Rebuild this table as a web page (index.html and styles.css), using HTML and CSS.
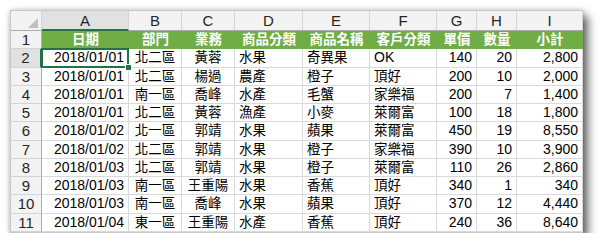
FILE: index.html
```html
<!DOCTYPE html>
<html lang="zh-Hant">
<head>
<meta charset="utf-8">
<title>Sheet</title>
<link rel="stylesheet" href="styles.css">
</head>
<body>
<div class="frame">
<div class="sheet">
  <div class="corner"><span class="tri"></span></div>
  <div class="ch selc">A</div><div class="ch">B</div><div class="ch">C</div><div class="ch">D</div><div class="ch">E</div><div class="ch">F</div><div class="ch">G</div><div class="ch">H</div><div class="ch">I</div>

  <div class="rh">1</div>
  <div class="hd">日期</div><div class="hd">部門</div><div class="hd">業務</div><div class="hd">商品分類</div><div class="hd">商品名稱</div><div class="hd">客戶分類</div><div class="hd">單價</div><div class="hd">數量</div><div class="hd">小計</div>

  <div class="rh selr">2</div>
  <div class="c r sel">2018/01/01</div><div class="c t m">北二區</div><div class="c t m">黃蓉</div><div class="c t">水果</div><div class="c t">奇異果</div><div class="c">OK</div><div class="c r">140</div><div class="c r">20</div><div class="c r">2,800</div>

  <div class="rh">3</div>
  <div class="c r">2018/01/01</div><div class="c t m">北二區</div><div class="c t m">楊過</div><div class="c t">農產</div><div class="c t">橙子</div><div class="c t">頂好</div><div class="c r">200</div><div class="c r">10</div><div class="c r">2,000</div>

  <div class="rh">4</div>
  <div class="c r">2018/01/01</div><div class="c t m">南一區</div><div class="c t m">喬峰</div><div class="c t">水產</div><div class="c t">毛蟹</div><div class="c t">家樂福</div><div class="c r">200</div><div class="c r">7</div><div class="c r">1,400</div>

  <div class="rh">5</div>
  <div class="c r">2018/01/01</div><div class="c t m">北二區</div><div class="c t m">黃蓉</div><div class="c t">漁產</div><div class="c t">小麥</div><div class="c t">萊爾富</div><div class="c r">100</div><div class="c r">18</div><div class="c r">1,800</div>

  <div class="rh">6</div>
  <div class="c r">2018/01/02</div><div class="c t m">北一區</div><div class="c t m">郭靖</div><div class="c t">水果</div><div class="c t">蘋果</div><div class="c t">萊爾富</div><div class="c r">450</div><div class="c r">19</div><div class="c r">8,550</div>

  <div class="rh">7</div>
  <div class="c r">2018/01/02</div><div class="c t m">北二區</div><div class="c t m">郭靖</div><div class="c t">水果</div><div class="c t">橙子</div><div class="c t">家樂福</div><div class="c r">390</div><div class="c r">10</div><div class="c r">3,900</div>

  <div class="rh">8</div>
  <div class="c r">2018/01/03</div><div class="c t m">北二區</div><div class="c t m">郭靖</div><div class="c t">水果</div><div class="c t">橙子</div><div class="c t">萊爾富</div><div class="c r">110</div><div class="c r">26</div><div class="c r">2,860</div>

  <div class="rh">9</div>
  <div class="c r">2018/01/03</div><div class="c t m">南一區</div><div class="c t m">王重陽</div><div class="c t">水果</div><div class="c t">香蕉</div><div class="c t">頂好</div><div class="c r">340</div><div class="c r">1</div><div class="c r">340</div>

  <div class="rh">10</div>
  <div class="c r">2018/01/03</div><div class="c t m">南一區</div><div class="c t m">喬峰</div><div class="c t">水果</div><div class="c t">蘋果</div><div class="c t">頂好</div><div class="c r">370</div><div class="c r">12</div><div class="c r">4,440</div>

  <div class="rh">11</div>
  <div class="c r">2018/01/04</div><div class="c t m">東一區</div><div class="c t m">王重陽</div><div class="c t">水產</div><div class="c t">香蕉</div><div class="c t">頂好</div><div class="c r">240</div><div class="c r">36</div><div class="c r">8,640</div>
</div>
</div>
</body>
</html>
```

FILE: styles.css
```css
html, body {
  margin: 0;
  padding: 0;
  background: #ffffff;
}

body {
  padding: 10px 0 0 10px;
  font-family: "Liberation Sans", "Noto Sans CJK TC", sans-serif;
  font-size: 14px;
  color: #000;
}

.frame {
  width: 573px;
  height: 223px;
  background: #ffffff;
  border: 1px solid #c8c8c8;
  box-sizing: border-box;
  box-shadow: 0 0 5px rgba(0, 0, 0, 0.22), 5px 6px 9px rgba(0, 0, 0, 0.6);
}

.sheet {
  display: grid;
  grid-template-columns: 31px 87px 53px 53px 68px 67px 67px 40px 40px 66px;
  grid-template-rows: 20px repeat(11, 18.25px);
}

.sheet > div {
  box-sizing: border-box;
  overflow: visible;
  white-space: nowrap;
}

.corner {
  background: #f3f3f3;
  border-right: 1px solid #d4d4d4;
  border-bottom: 1px solid #ababab;
  position: relative;
}

.tri {
  position: absolute;
  right: 3px;
  bottom: 2px;
  width: 10px;
  height: 10px;
  background: #c0c0c0;
  clip-path: polygon(100% 0, 100% 100%, 0 100%);
}

.ch {
  background: #f3f3f3;
  border-right: 1px solid #d4d4d4;
  border-bottom: 1px solid #ababab;
  text-align: center;
  line-height: 20px;
  color: #262626;
  font-size: 15px;
}

.ch.selc {
  background: #e1e1e1;
  border-bottom: 2px solid #217346;
  line-height: 19px;
}

.rh {
  background: #f3f3f3;
  border-right: 1px solid #ababab;
  border-bottom: 1px solid #d4d4d4;
  text-align: center;
  line-height: 18px;
  color: #262626;
  font-size: 15px;
}

.rh.selr {
  background: #e1e1e1;
  border-right: 2px solid #217346;
}

.hd {
  background: #70ad47;
  color: #ffffff;
  font-weight: bold;
  font-size: 13.5px;
  text-align: center;
  line-height: 18px;
  border-bottom: 1px solid #70ad47;
}

.c {
  border-right: 1px solid #d9d9d9;
  border-bottom: 1px solid #d9d9d9;
  line-height: 17px;
  padding: 0 3px 0 4px;
}

.c.t {
  font-size: 13.5px;
}

.c.m {
  text-align: center;
  padding: 0;
}

.c.r {
  text-align: right;
  padding-right: 4px;
}

.c.sel {
  position: relative;
}

.c.sel::after {
  content: "";
  position: absolute;
  left: -1px;
  top: -1px;
  right: -1px;
  bottom: -1px;
  border: 2px solid #217346;
}

.c.sel::before {
  content: "";
  position: absolute;
  right: -4px;
  bottom: -4px;
  width: 5px;
  height: 5px;
  background: #217346;
  border: 1px solid #ffffff;
  z-index: 2;
}
```
